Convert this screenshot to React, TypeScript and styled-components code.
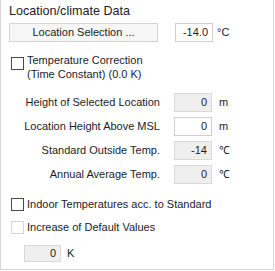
import * as React from 'react';
import styled, { createGlobalStyle } from 'styled-components';

const GlobalStyle = createGlobalStyle`
  html, body {
    margin: 0;
    padding: 0;
    background: #ffffff;
  }
  body {
    font-family: "Liberation Sans", Arial, sans-serif;
    font-size: 11px;
    color: #1c1c28;
  }
`;

interface FieldRow {
  label: string;
  value: string;
  unit: string;
  readOnly: boolean;
}

const rows: FieldRow[] = [
  { label: 'Height of Selected Location', value: '0', unit: 'm', readOnly: true },
  { label: 'Location Height Above MSL', value: '0', unit: 'm', readOnly: false },
  { label: 'Standard Outside Temp.', value: '-14', unit: '℃', readOnly: true },
  { label: 'Annual Average Temp.', value: '0', unit: '℃', readOnly: true }
];

export default function App(): React.ReactElement {
  return (
    <>
      <GlobalStyle />
      <Frame>
        <Title>Location/climate Data</Title>

        <SelectionRow>
          <SelectButton type="button">Location Selection ...</SelectButton>
          <ValueBox $width={38}>-14.0</ValueBox>
          <Unit $offset={4}>°C</Unit>
        </SelectionRow>

        <CheckRow $top={12}>
          <Box $disabled={false} $offset={3} />
          <CheckText>
            Temperature Correction
            <br />
            (Time Constant) (0.0 K)
          </CheckText>
        </CheckRow>

        <FieldGrid>
          {rows.map((row) => (
            <React.Fragment key={row.label}>
              <FieldLabel>{row.label}</FieldLabel>
              <ValueBox $width={38} $readOnly={row.readOnly}>
                {row.value}
              </ValueBox>
              <Unit $offset={-7}>{row.unit}</Unit>
            </React.Fragment>
          ))}
        </FieldGrid>

        <CheckRow $top={14}>
          <Box $disabled={false} $offset={0} />
          <CheckText>Indoor Temperatures acc. to Standard</CheckText>
        </CheckRow>

        <CheckRow $top={9}>
          <Box $disabled={true} $offset={0} />
          <CheckText>Increase of Default Values</CheckText>
        </CheckRow>

        <IncreaseRow>
          <ValueBox $width={37} $height={17} $readOnly>
            0
          </ValueBox>
          <Unit $offset={6}>K</Unit>
        </IncreaseRow>
      </Frame>
    </>
  );
}

const Frame = styled.div`
  width: 274px;
  box-sizing: border-box;
  border: 1px solid #d6d6d6;
  border-top: none;
  padding: 3px 0 7px 8px;
  display: flex;
  flex-direction: column;
`;

const Title = styled.div`
  font-size: 12.6px;
  line-height: 16px;
  height: 16px;
  white-space: nowrap;
`;

const SelectionRow = styled.div`
  display: flex;
  align-items: center;
  margin-top: 4px;
  height: 19px;
`;

const SelectButton = styled.button`
  width: 149px;
  height: 19px;
  margin: 0 17px 0 0;
  padding: 0;
  box-sizing: border-box;
  border: 1px solid #d4d4d4;
  background: #f6f6f6;
  font-family: inherit;
  font-size: 11px;
  color: inherit;
  line-height: 17px;
`;

const ValueBox = styled.div<{ $width: number; $height?: number; $readOnly?: boolean }>`
  width: ${(p) => p.$width}px;
  height: ${(p) => p.$height ?? 19}px;
  box-sizing: border-box;
  border: 1px solid ${(p) => (p.$readOnly ? '#d9d9d9' : '#cfcfcf')};
  background: ${(p) => (p.$readOnly ? '#efefef' : '#ffffff')};
  text-align: right;
  padding-right: 4px;
  line-height: ${(p) => (p.$height ?? 19) - 2}px;
  font-size: 11px;
`;

const Unit = styled.span<{ $offset: number }>`
  margin-left: ${(p) => p.$offset}px;
  font-size: 11px;
  line-height: 19px;
`;

const CheckRow = styled.div<{ $top: number }>`
  display: flex;
  align-items: flex-start;
  margin-top: ${(p) => p.$top}px;
  padding-left: 2px;
`;

const Box = styled.span<{ $disabled: boolean; $offset: number }>`
  flex: none;
  width: 13px;
  height: 13px;
  box-sizing: border-box;
  margin-top: ${(p) => p.$offset}px;
  margin-right: 3px;
  border: 1px solid ${(p) => (p.$disabled ? '#d6d6d6' : '#4a4a4a')};
  background: #ffffff;
`;

const CheckText = styled.span`
  font-size: 11px;
  line-height: 13.5px;
  white-space: nowrap;
`;

const FieldGrid = styled.div`
  display: grid;
  grid-template-columns: 151px 38px auto;
  column-gap: 14px;
  row-gap: 5px;
  margin-top: 12px;
  grid-auto-rows: 19px;
  align-items: center;
`;

const FieldLabel = styled.div`
  text-align: right;
  white-space: nowrap;
  line-height: 19px;
`;

const IncreaseRow = styled.div`
  display: flex;
  align-items: center;
  margin-top: 11px;
  margin-left: 15px;
  height: 17px;
`;
